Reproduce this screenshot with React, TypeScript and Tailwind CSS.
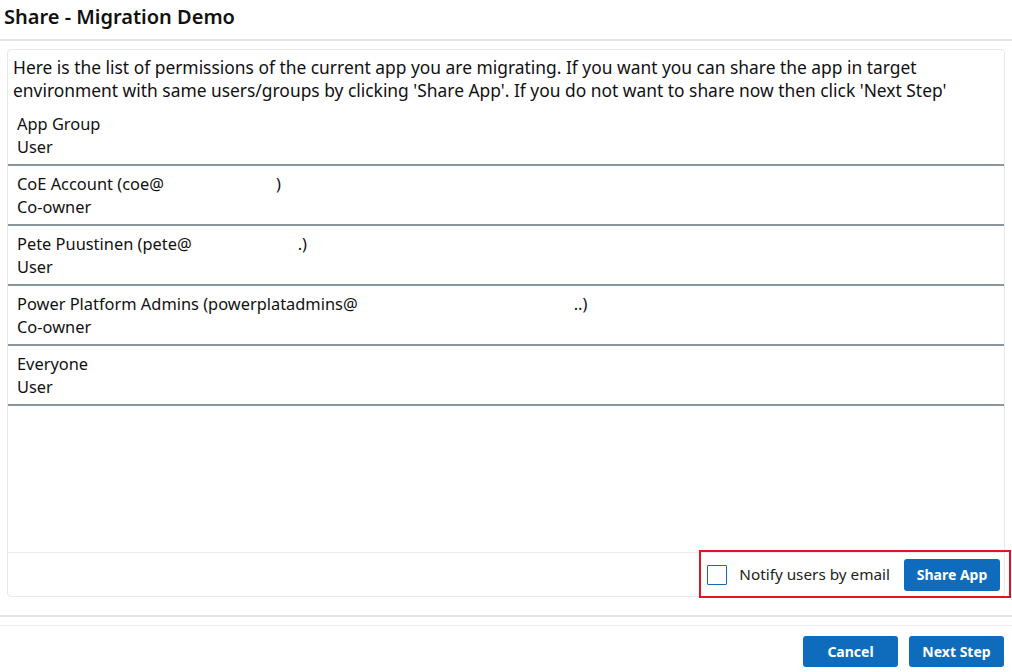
import React, { useState } from 'react';

const permissions = [
  { name: 'App Group', role: 'User' },
  { name: 'CoE Account (coe@', tail: ')', role: 'Co-owner', gap: 'w-[112px]' },
  { name: 'Pete Puustinen (pete@', tail: '.)', role: 'User', gap: 'w-[106px]' },
  { name: 'Power Platform Admins (powerplatadmins@', tail: '..)', role: 'Co-owner', gap: 'w-[216px]' },
  { name: 'Everyone', role: 'User' },
];

export default function App() {
  const [notify, setNotify] = useState(false);

  return (
    <div className="w-[1012px] h-[672px] bg-white flex flex-col text-[#111] font-['Noto_Sans','Open_Sans',sans-serif] overflow-hidden">
      {/* Titel */}
      <div className="h-[41px] shrink-0 flex items-center px-[4px] border-b-2 border-[#e4e4e4]">
        <h1 className="text-[20px] font-semibold -mt-[5px]">Share - Migration Demo</h1>
      </div>

      <div className="h-[576px] shrink-0 px-[7px] pt-[8px] pb-[18px] border-b-2 border-[#e4e4e4] flex flex-col">
        <div className="flex-1 flex flex-col border border-[#e8e8e8] rounded-[4px]">
          <p className="px-[5px] pt-[6px] text-[17.4px] leading-[23px]">
            Here is the list of permissions of the current app you are migrating. If you want you can share the app in target
            <br />
            environment with same users/groups by clicking 'Share App'. If you do not want to share now then click 'Next Step'
          </p>

          <div className="flex-1 mt-[4px]">
            {permissions.map((p) => (
              <div key={p.name} className="h-[60px] pl-[9px] pt-[6px] border-b-2 border-[#8a969b] text-[16.4px] leading-[23px]">
                <div className="flex">
                  <span>{p.name}</span>
                  {p.tail && <span className={p.gap} />}
                  {p.tail && <span>{p.tail}</span>}
                </div>
                <div>{p.role}</div>
              </div>
            ))}
          </div>

          <div className="relative h-[44px] shrink-0 border-t border-[#ececec] rounded-b-[4px] flex items-center justify-end gap-[14px] pr-[4px]">
            <label className="flex items-center gap-[12px] cursor-pointer">
              <span
                onClick={() => setNotify(!notify)}
                className={`shrink-0 w-[20px] h-[20px] border-[1.5px] border-[#0f6cbd] rounded-[1px] ${notify ? 'bg-[#0f6cbd]' : 'bg-white'}`}
              />
              <span className="text-[15.3px] text-[#222] whitespace-nowrap">Notify users by email</span>
            </label>
            <button className="shrink-0 w-[96px] h-[32px] rounded-[3px] bg-[#0f6cbd] text-white text-[14px] font-bold">
              Share App
            </button>
            <div className="absolute left-[691px] -top-[3px] w-[312px] h-[48px] border-2 border-[#e81123] pointer-events-none" />
          </div>
        </div>
      </div>

      <div className="flex-1 border-t border-[#ececec] mt-[8px] flex justify-end items-start gap-[11px] pr-[8px] pt-[10px]">
        <button className="w-[95px] h-[31px] rounded-[3px] bg-[#0f6cbd] text-white text-[14px] font-bold">Cancel</button>
        <button className="w-[95px] h-[31px] rounded-[3px] bg-[#0f6cbd] text-white text-[14px] font-bold">Next Step</button>
      </div>
    </div>
  );
}
